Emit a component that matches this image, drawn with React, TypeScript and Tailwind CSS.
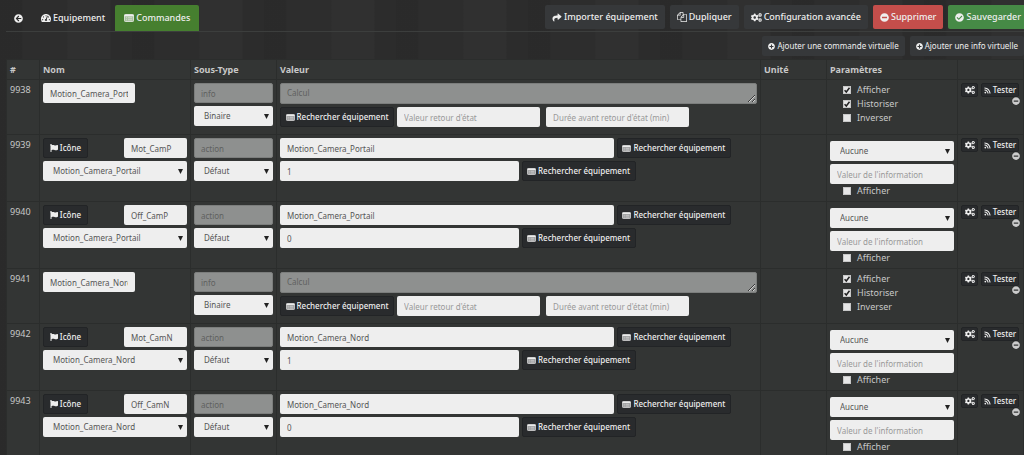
import type { ReactNode } from "react"
import {
  FaArrowCircleLeft,
  FaCheckCircle,
  FaCogs,
  FaFlag,
  FaMinusCircle,
  FaPlusCircle,
  FaRss,
  FaShare,
  FaTachometerAlt,
} from "react-icons/fa"

type Command = {
  id: number
  kind: "info" | "action"
  name: string
  value?: string
  request?: string
}

const commands: Command[] = [
  { id: 9938, kind: "info", name: "Motion_Camera_Portail" },
  { id: 9939, kind: "action", name: "Mot_CamP", value: "Motion_Camera_Portail", request: "1" },
  { id: 9940, kind: "action", name: "Off_CamP", value: "Motion_Camera_Portail", request: "0" },
  { id: 9941, kind: "info", name: "Motion_Camera_Nord" },
  { id: 9942, kind: "action", name: "Mot_CamN", value: "Motion_Camera_Nord", request: "1" },
  { id: 9943, kind: "action", name: "Off_CamN", value: "Motion_Camera_Nord", request: "0" },
]

const field =
  "block h-5 min-w-0 rounded-xs bg-[#eeeeee] px-[7px] text-[8px] text-[#555555] placeholder:text-[#999999] outline-none"
const disabledField =
  "block w-full rounded-xs border border-[#7c7e7d] bg-[#8e908f] px-[6px] text-[8px] text-[#5f6160] placeholder:text-[#5f6160]"
const darkButton =
  "flex shrink-0 items-center justify-center rounded-xs border border-[#222426] bg-[#292b2d] text-[8px] font-medium whitespace-nowrap text-[#eeeeee]"
const barButton =
  "flex h-6 shrink-0 items-center gap-[2px] rounded-xs px-[7px] text-[9px] font-medium whitespace-nowrap text-[#eeeeee]"
const addButton =
  "flex h-5 items-center gap-[2px] rounded-xs bg-[#36383a] px-[6px] text-[8px] whitespace-nowrap text-[#eeeeee]"
const cell = "border border-[#2b2d2c] px-[3px] pt-[3px] pb-0 align-top"

const ListIcon = ({ className }: { className: string }) => (
  <svg viewBox="0 0 20 16" className={className} fill="none" aria-hidden="true">
    <rect x="1" y="1" width="18" height="14" rx="1.5" fill="currentColor" fillOpacity="0.6" stroke="currentColor" strokeWidth="1.6" />
    <path d="M1 3h18" stroke="currentColor" strokeWidth="3" />
    <path d="M4 7.5h2m2 0h8M4 11.5h2m2 0h8" stroke="currentColor" strokeOpacity="0.7" strokeWidth="1.6" />
  </svg>
)

const FilesIcon = ({ className }: { className: string }) => (
  <svg viewBox="0 0 1792 1792" className={className} fill="currentColor" aria-hidden="true">
    <path d="M1696 384q40 0 68 28t28 68v1216q0 40-28 68t-68 28h-960q-40 0-68-28t-28-68v-288h-544q-40 0-68-28t-28-68v-672q0-40 20-88t48-76l408-408q28-28 76-48t88-20h416q40 0 68 28t28 68v328q68-40 128-40h416zm-544 213l-299 299h299v-299zm-640-384l-299 299h299v-299zm196 647l316-316v-416h-384v416q0 40-28 68t-68 28h-416v640h512v-256q0-40 20-88t48-76zm956 804v-1152h-384v416q0 40-28 68t-68 28h-416v640h896z" />
  </svg>
)

const Select = ({ label, value }: { label: string; value: string }) => (
  <div className="relative">
    <select aria-label={label} className={`${field} w-full appearance-none pl-[10px]`} defaultValue={value}>
      <option>{value}</option>
    </select>
    <svg viewBox="0 0 8 8" className="pointer-events-none absolute top-2 right-1 h-[5px] w-[5px]" aria-hidden="true">
      <path d="M0 0h8L4 8z" fill="#222222" />
    </svg>
  </div>
)

const Check = ({ label, checked = false }: { label: string; checked?: boolean }) => (
  <label className="flex h-[14px] items-center gap-[6px] pl-[13px]">
    <span className="relative block h-2 w-2">
      <input
        type="checkbox"
        defaultChecked={checked}
        className="peer block h-2 w-2 appearance-none border border-[#c8c8c8] bg-[#e6e6e6]"
      />
      <svg viewBox="0 0 8 8" className="pointer-events-none absolute inset-0 hidden h-2 w-2 peer-checked:block" aria-hidden="true">
        <path d="M1.6 4.2 3.3 6 6.5 1.8" fill="none" stroke="#222222" strokeWidth="1.5" />
      </svg>
    </span>
    <span>{label}</span>
  </label>
)

const SearchButton = () => (
  <button type="button" className={`${darkButton} h-5 w-[114px] gap-[2px]`}>
    <ListIcon className="h-[7px] w-[9px]" />
    Rechercher équipement
  </button>
)

const BarButton = ({ color, children }: { color: string; children: ReactNode }) => (
  <button type="button" className={`${barButton} ${color}`}>
    {children}
  </button>
)

const CommandRow = ({ command }: { command: Command }) => {
  const isInfo = command.kind === "info"
  return (
    <tr className={isInfo ? "h-[55px]" : "h-[67px]"}>
      <td className={cell}>{command.id}</td>
      <td className={cell}>
        {isInfo ? (
          <input aria-label="Nom" className={`${field} w-[92px]`} defaultValue={command.name} />
        ) : (
          <div className="space-y-[3px]">
            <div className="flex justify-between">
              <button type="button" className={`${darkButton} h-5 w-[45px] gap-[2px]`}>
                <FaFlag className="h-2 w-2" />
                Icône
              </button>
              <input aria-label="Nom" className={`${field} w-[63px]`} defaultValue={command.name} />
            </div>
            <Select label="Commande liée" value={command.value ?? ""} />
          </div>
        )}
      </td>
      <td className={cell}>
        <div className="space-y-[3px]">
          <input aria-label="Type" disabled className={`${disabledField} h-5`} defaultValue={command.kind} />
          <Select label="Sous-type" value={isInfo ? "Binaire" : "Défaut"} />
        </div>
      </td>
      <td className={cell}>
        {isInfo ? (
          <div className="space-y-[3px]">
            <textarea
              aria-label="Calcul"
              placeholder="Calcul"
              rows={1}
              className={`${disabledField} h-[21px] resize-y overflow-hidden py-[2px]`}
            />
            <div className="flex">
              <SearchButton />
              <input aria-label="Valeur retour d'état" placeholder="Valeur retour d'état" className={`${field} ml-[3px] w-[30%]`} />
              <input
                aria-label="Durée avant retour d'état"
                placeholder="Durée avant retour d'état (min)"
                className={`${field} ml-[6px] w-[30%]`}
              />
            </div>
          </div>
        ) : (
          <div className="space-y-[3px]">
            <div className="flex gap-[3px]">
              <input aria-label="Nom information" className={`${field} w-[70%]`} defaultValue={command.value} />
              <SearchButton />
            </div>
            <div className="flex gap-[3px]">
              <input aria-label="Valeur" className={`${field} w-1/2`} defaultValue={command.request} />
              <SearchButton />
            </div>
          </div>
        )}
      </td>
      <td className={cell} />
      <td className={cell}>
        {isInfo ? (
          <>
            <Check label="Afficher" checked />
            <Check label="Historiser" checked />
            <Check label="Inverser" />
          </>
        ) : (
          <div className="pt-[3px]">
            <Select label="Information" value="Aucune" />
            <input
              aria-label="Valeur de l'information"
              placeholder="Valeur de l'information"
              className={`${field} mt-[3px] w-full`}
            />
            <Check label="Afficher" />
          </div>
        )}
      </td>
      <td className={cell}>
        <div className="flex gap-[3px]">
          <button type="button" aria-label="Configuration" className={`${darkButton} h-[14px] w-[17px]`}>
            <FaCogs className="h-[10px] w-[10px]" />
          </button>
          <button type="button" className={`${darkButton} h-[14px] w-[38px] gap-[2px]`}>
            <FaRss className="h-[7px] w-[7px]" />
            Tester
          </button>
        </div>
        <button type="button" aria-label="Supprimer la commande" className="ml-auto block text-[#cccccc]">
          <FaMinusCircle className="h-2 w-2" />
        </button>
      </td>
    </tr>
  )
}

export default function App() {
  return (
    <div className="min-h-screen overflow-hidden bg-[#2d2d2d] bg-[repeating-linear-gradient(90deg,#00000010_0px,#00000010_22px,transparent_23px,transparent_67px,#ffffff04_68px,#ffffff04_110px,#00000008_111px,#00000008_132px)] pl-[6px] font-['Noto_Sans',sans-serif] text-[9px] leading-[14px] text-[#c8c8c8]">
      <header className="-mr-1 flex h-8 items-start justify-between border-b border-[#3c3e3d] pt-[5px]">
        <nav className="flex text-[9px] font-medium text-[#eeeeee]">
          <a href="#retour" aria-label="Retour" className="flex h-[26px] items-center px-2">
            <FaArrowCircleLeft className="h-[9px] w-[9px]" />
          </a>
          <a href="#equipement" className="flex h-[26px] items-center gap-[2px] px-[10px]">
            <FaTachometerAlt className="h-[10px] w-[10px]" />
            Equipement
          </a>
          <a href="#commandes" className="flex h-[26px] items-center gap-[2px] rounded-t-xs bg-[#467f2f] px-[9px]">
            <ListIcon className="h-2 w-[10px]" />
            Commandes
          </a>
        </nav>
        <div className="flex gap-[5px]">
          <BarButton color="bg-[#36383a]">
            <FaShare className="h-[9px] w-[10px]" />
            Importer équipement
          </BarButton>
          <BarButton color="bg-[#36383a]">
            <FilesIcon className="h-[10px] w-[10px]" />
            Dupliquer
          </BarButton>
          <BarButton color="bg-[#36383a]">
            <FaCogs className="h-[11px] w-[11px]" />
            Configuration avancée
          </BarButton>
          <BarButton color="bg-[#c44e4b]">
            <FaMinusCircle className="h-[9px] w-[9px]" />
            Supprimer
          </BarButton>
          <BarButton color="bg-[#468a46]">
            <FaCheckCircle className="h-[9px] w-[9px]" />
            Sauvegarder
          </BarButton>
        </div>
      </header>
      <div className="flex justify-end gap-[5px] pt-1 pb-[3px]">
        <button type="button" className={addButton}>
          <FaPlusCircle className="h-[7px] w-[7px]" />
          Ajouter une commande virtuelle
        </button>
        <button type="button" className={addButton}>
          <FaPlusCircle className="h-[7px] w-[7px]" />
          Ajouter une info virtuelle
        </button>
      </div>
      <table className="w-full table-fixed border-collapse bg-[#343635]/90">
        <colgroup>
          <col className="w-[33px]" />
          <col className="w-[151px]" />
          <col className="w-[86px]" />
          <col />
          <col className="w-[66px]" />
          <col className="w-[131px]" />
          <col className="w-[66px]" />
        </colgroup>
        <thead>
          <tr className="h-5 text-left">
            {["#", "Nom", "Sous-Type", "Valeur", "Unité", "Paramètres", ""].map((title) => (
              <th key={title} className={`${cell} font-bold`}>
                {title}
              </th>
            ))}
          </tr>
        </thead>
        <tbody>
          {commands.map((command) => (
            <CommandRow key={command.id} command={command} />
          ))}
        </tbody>
      </table>
    </div>
  )
}
